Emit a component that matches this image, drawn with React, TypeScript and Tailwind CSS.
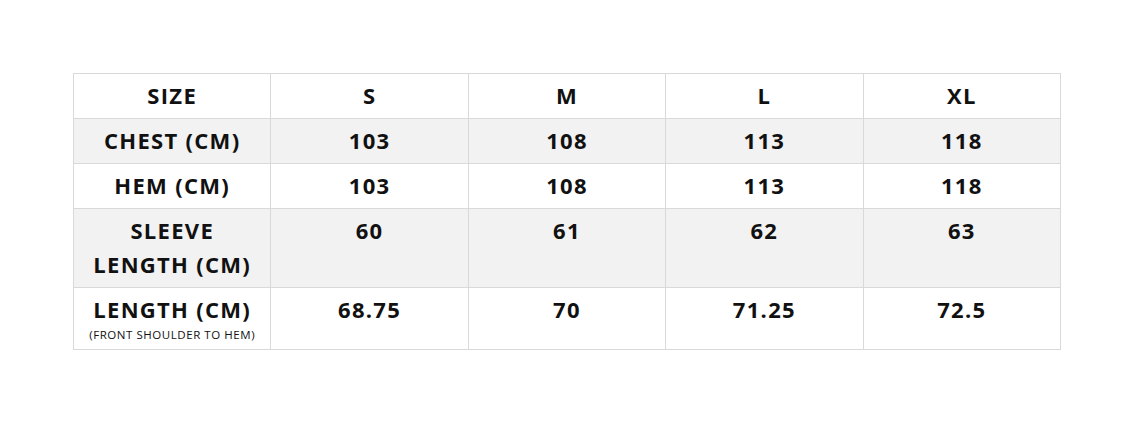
import React from "react";

const rows: { label: React.ReactNode; values: string[]; bg: string }[] = [
  { label: "CHEST (CM)", values: ["103", "108", "113", "118"], bg: "bg-[#f2f2f2]" },
  { label: "HEM (CM)", values: ["103", "108", "113", "118"], bg: "bg-white" },
  {
    label: (
      <>
        SLEEVE
        <br />
        LENGTH (CM)
      </>
    ),
    values: ["60", "61", "62", "63"],
    bg: "bg-[#f2f2f2]",
  },
  {
    label: (
      <>
        LENGTH (CM)
        <div className="text-[11.5px] leading-[17px] font-normal tracking-[0.55px]">(FRONT SHOULDER TO HEM)</div>
      </>
    ),
    values: ["68.75", "70", "71.25", "72.5"],
    bg: "bg-white",
  },
];

export default function App() {
  return (
    <div className="w-[1138px] h-[428px] bg-white pt-[73px] pl-[73px]" style={{ fontFamily: '"Open Sans", "Liberation Sans", sans-serif' }}>
      <table className="w-[988px] table-fixed border-collapse text-[#111] text-[22px] leading-[34px] font-bold tracking-[1.3px]">
        <tbody>
          <tr className="bg-white">
            {["SIZE", "S", "M", "L", "XL"].map((h) => (
              <td key={h} className="border border-[#d9d9d9] text-center align-top pt-[4px] pb-[6px]">
                {h}
              </td>
            ))}
          </tr>
          {rows.map((r, i) => (
            <tr key={i} className={r.bg}>
              <td className="border border-[#d9d9d9] text-center align-top pt-[4px] pb-[6px]">{r.label}</td>
              {r.values.map((v, j) => (
                <td key={j} className="border border-[#d9d9d9] text-center align-top pt-[4px] pb-[6px]">
                  {v}
                </td>
              ))}
            </tr>
          ))}
        </tbody>
      </table>
    </div>
  );
}
